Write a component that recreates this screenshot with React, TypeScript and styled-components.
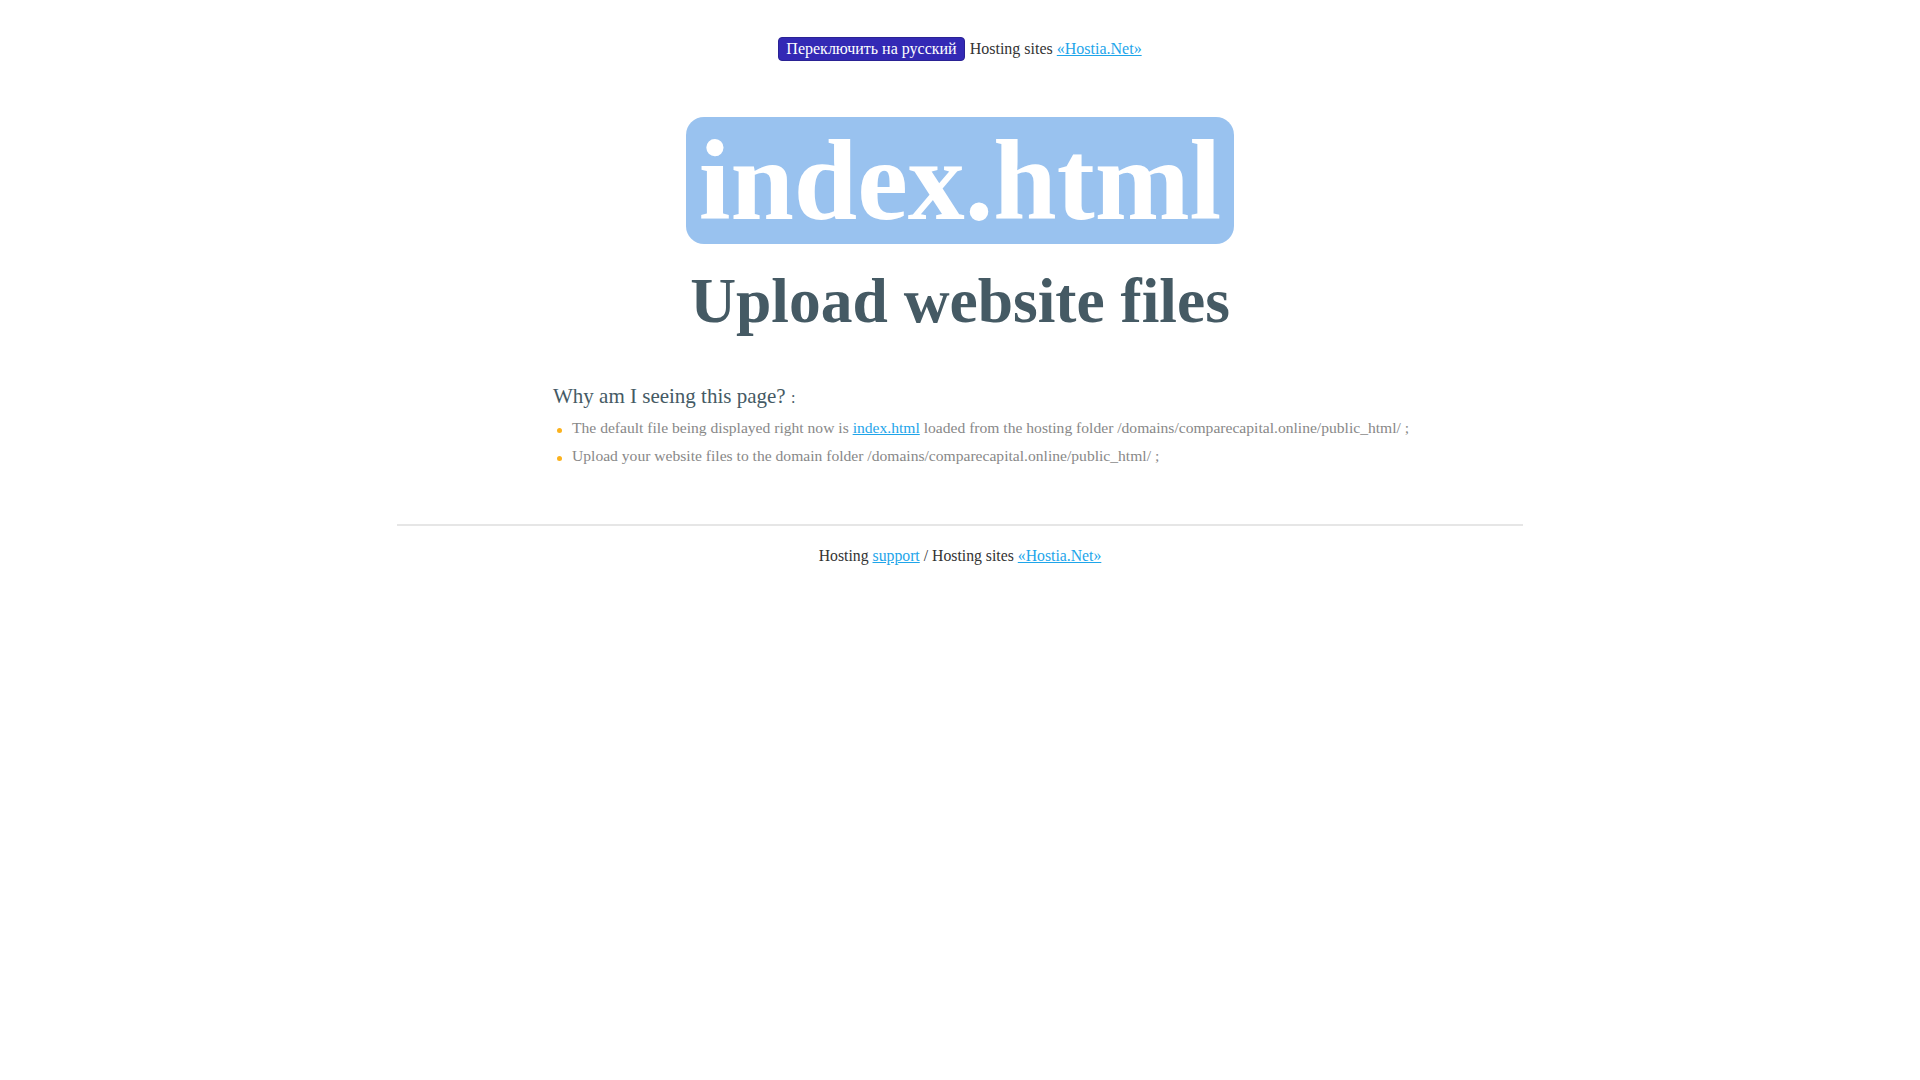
import styled, { createGlobalStyle } from "styled-components";

const Global = createGlobalStyle`
  html, body { margin: 0; padding: 0; background: #fff; }
  body { font-family: "Liberation Serif", "Times New Roman", serif; font-size: 16px; color: #333; }
`;

const Page = styled.div`
  width: 1126px;
  margin: 0 auto;
  padding-top: 37px;
`;

const TopBar = styled.div`
  display: flex;
  justify-content: center;
  align-items: center;
  gap: 5px;
  font-size: 16px;
  color: #333;
`;

const SwitchButton = styled.button`
  font-family: "Liberation Serif", "Times New Roman", serif;
  font-size: 16px;
  color: #fff;
  background: #3329b5;
  border: 1px solid #2a2294;
  border-radius: 4px;
  height: 24px;
  padding: 0 7px;
  cursor: pointer;
`;

const Link = styled.a`
  color: #1ea5ea;
  text-decoration: underline;
`;

const Hero = styled.div`
  display: flex;
  flex-direction: column;
  align-items: center;
  margin-top: 56px;
`;

const FileBadge = styled.div`
  background: #99c2ef;
  color: #fff;
  border-radius: 18px;
  font-weight: bold;
  font-size: 114px;
  line-height: 127px;
  padding: 0 13px;
`;

const Title = styled.h1`
  margin: 20px 0 0;
  font-size: 63.5px;
  font-weight: bold;
  color: #455a64;
`;

const Info = styled.section`
  padding-left: 156px;
  margin-top: 46px;
`;

const Question = styled.div`
  font-size: 21px;
  color: #455a64;
  span { font-size: 16px; }
`;

const List = styled.ul`
  list-style: none;
  margin: 5px 0 0;
  padding: 0;
`;

const Item = styled.li`
  position: relative;
  padding-left: 19px;
  font-size: 15.6px;
  line-height: 28px;
  color: #888;
  &::before {
    content: "";
    position: absolute;
    left: 4px;
    top: 14px;
    width: 5px;
    height: 5px;
    border-radius: 50%;
    background: #fbb21d;
  }
`;

const Divider = styled.hr`
  border: none;
  border-top: 2px solid #e6e6e6;
  margin: 54px 0 0;
`;

const Footer = styled.div`
  text-align: center;
  margin-top: 21px;
  font-size: 15.75px;
  color: #333;
`;

export default function App() {
  return (
    <>
      <Global />
      <Page>
        <TopBar>
          <SwitchButton>Переключить на русский</SwitchButton>
          <span>
            Hosting sites <Link href="#">«Hostia.Net»</Link>
          </span>
        </TopBar>
        <Hero>
          <FileBadge>index.html</FileBadge>
          <Title>Upload website files</Title>
        </Hero>
        <Info>
          <Question>
            Why am I seeing this page? <span>:</span>
          </Question>
          <List>
            <Item>
              The default file being displayed right now is <Link href="#">index.html</Link> loaded from the hosting
              folder /domains/comparecapital.online/public_html/ ;
            </Item>
            <Item>Upload your website files to the domain folder /domains/comparecapital.online/public_html/ ;</Item>
          </List>
        </Info>
        <Divider />
        <Footer>
          Hosting <Link href="#">support</Link> / Hosting sites <Link href="#">«Hostia.Net»</Link>
        </Footer>
      </Page>
    </>
  );
}
